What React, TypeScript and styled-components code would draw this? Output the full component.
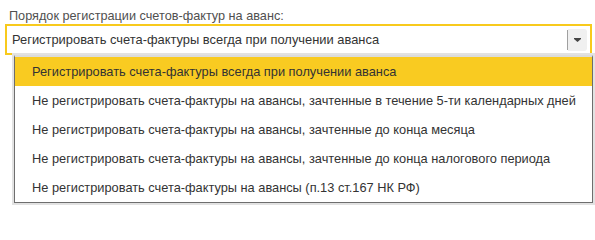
import React from "react";
import styled, { createGlobalStyle } from "styled-components";

const Global = createGlobalStyle`
  html, body { margin: 0; padding: 0; background: #fff; }
  body { font-family: "Liberation Sans", Arial, sans-serif; }
`;

const Page = styled.div`
  width: 595px;
  height: 206px;
  box-sizing: border-box;
  padding: 8px 0 0 5px;
  display: flex;
  flex-direction: column;
`;

const Label = styled.div`
  font-size: 12.7px;
  line-height: 16px;
  height: 16px;
  color: #505050;
  padding-left: 4px;
  white-space: nowrap;
`;

const Field = styled.div`
  width: 587px;
  height: 31px;
  box-sizing: border-box;
  border: 2px solid #f8ca1c;
  display: flex;
  align-items: center;
  background: #fff;
`;

const Value = styled.div`
  flex: 1;
  font-size: 12.9px;
  color: #333;
  padding-left: 5px;
  white-space: nowrap;
`;

const Separator = styled.div`
  width: 1px;
  height: 20px;
  background: #a0a0a0;
`;

const DropButton = styled.div`
  width: 19px;
  height: 22px;
  margin-right: 3px;
  background: #f0f0f0;
  border-radius: 0 3px 3px 0;
  display: flex;
  align-items: center;
  justify-content: center;
`;

const Popup = styled.div`
  margin-left: 9px;
  width: 579px;
  box-sizing: border-box;
  border: 1px solid #6e6e6e;
  border-top: 2px solid #dcdcdc;
  box-shadow: 0 0 0 2px #e2e2e2;
  background: #fff;
  display: flex;
  flex-direction: column;
`;

const Item = styled.div<{ $active?: boolean }>`
  height: 29px;
  display: flex;
  align-items: center;
  padding-left: 17px;
  font-size: 12.8px;
  color: #333;
  white-space: nowrap;
  background: ${(p) => (p.$active ? "#f9cb21" : "#fff")};
`;

const items = [
  "Регистрировать счета-фактуры всегда при получении аванса",
  "Не регистрировать счета-фактуры на авансы, зачтенные в течение 5-ти календарных дней",
  "Не регистрировать счета-фактуры на авансы, зачтенные до конца месяца",
  "Не регистрировать счета-фактуры на авансы, зачтенные до конца налогового периода",
  "Не регистрировать счета-фактуры на авансы (п.13 ст.167 НК РФ)",
];

export default function App() {
  return (
    <>
      <Global />
      <Page>
        <Label>Порядок регистрации счетов-фактур на аванс:</Label>
        <Field>
          <Value>{items[0]}</Value>
          <Separator />
          <DropButton>
            <svg width="7" height="4" viewBox="0 0 7 4">
              <path d="M0 0H7V1L3.5 4L0 1Z" fill="#444" />
            </svg>
          </DropButton>
        </Field>
        <Popup>
          {items.map((t, i) => (
            <Item key={i} $active={i === 0}>
              {t}
            </Item>
          ))}
        </Popup>
      </Page>
    </>
  );
}
